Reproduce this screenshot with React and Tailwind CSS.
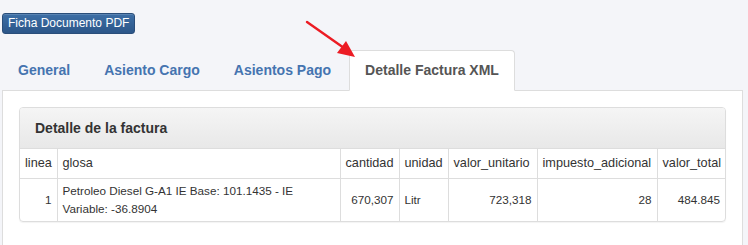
import React from 'react';

const tabs = ['General', 'Asiento Cargo', 'Asientos Pago', 'Detalle Factura XML'];

const columns = [
    { key: 'linea', label: 'linea', width: 'w-[37px]', align: 'text-right' },
    { key: 'glosa', label: 'glosa', width: 'w-[283px]', align: 'text-left' },
    { key: 'cantidad', label: 'cantidad', width: 'w-[59px]', align: 'text-right' },
    { key: 'unidad', label: 'unidad', width: 'w-[49px]', align: 'text-left' },
    { key: 'valor_unitario', label: 'valor_unitario', width: 'w-[89px]', align: 'text-right' },
    { key: 'impuesto_adicional', label: 'impuesto_adicional', width: 'w-[120px]', align: 'text-right' },
    { key: 'valor_total', label: 'valor_total', width: '', align: 'text-right' },
];

const rows = [
    {
        linea: '1',
        glosa: 'Petroleo Diesel G-A1 IE Base: 101.1435 - IE Variable: -36.8904',
        cantidad: '670,307',
        unidad: 'Litr',
        valor_unitario: '723,318',
        impuesto_adicional: '28',
        valor_total: '484.845',
    },
];

const App = () => {
    const active = 3;

    return (
        <div className="relative min-h-[245px] bg-[#f4f5f9] pt-[13px] font-['Liberation_Sans',Arial,sans-serif] text-[#333]">
            <div className="ml-[2px] flex">
                <button
                    type="button"
                    className="h-[21px] rounded-[3px] border border-[#2a4e7a] bg-gradient-to-b from-[#3d6fa6] to-[#2c5689] px-[5px] text-[12px] leading-[19px] text-white shadow-[inset_0_1px_0_rgba(255,255,255,0.15)]"
                >
                    Ficha Documento PDF
                </button>
            </div>

            <div className="mt-[16px] ml-[2px] mr-[5px]">
                <ul className="flex border-b border-[#dddddd]">
                    {tabs.map((tab, i) => (
                        <li key={tab} className="-mb-px mr-[2px]">
                            <span
                                className={
                                    i === active
                                        ? 'block h-[41px] rounded-t-[4px] border border-[#dddddd] border-b-transparent bg-white px-[15px] text-[14px] font-bold leading-[39px] text-[#555]'
                                        : 'block h-[41px] rounded-t-[4px] border border-transparent px-[15px] text-[14px] font-bold leading-[39px] text-[#4574b0]'
                                }
                            >
                                {tab}
                            </span>
                        </li>
                    ))}
                </ul>

                <div className="min-h-[200px] border-x border-[#dddddd] bg-white p-4">
                    <div className="overflow-hidden rounded-[4px] border border-[#dddddd] shadow-[0_1px_1px_rgba(0,0,0,0.05)]">
                        <div className="h-[41px] border-b border-[#dddddd] bg-gradient-to-b from-[#f5f5f5] to-[#e8e8e8] px-[15px] text-[14px] font-bold leading-[40px] text-[#333]">
                            Detalle de la factura
                        </div>
                        <table className="w-full table-fixed border-collapse text-[11.7px]">
                            <colgroup>
                                {columns.map((col) => (
                                    <col key={col.key} className={col.width} />
                                ))}
                            </colgroup>
                            <thead>
                                <tr className="h-[29px]">
                                    {columns.map((col, i) => (
                                        <th
                                            key={col.key}
                                            className={`border-b border-[#dddddd] px-[5px] text-left text-[12.7px] font-normal text-[#333] ${i > 0 ? 'border-l' : ''}`}
                                        >
                                            {col.label}
                                        </th>
                                    ))}
                                </tr>
                            </thead>
                            <tbody>
                                {rows.map((row) => (
                                    <tr key={row.linea} className="h-[43px]">
                                        {columns.map((col, i) => (
                                            <td
                                                key={col.key}
                                                className={`border-[#dddddd] px-[5px] py-[3px] leading-[18px] ${col.align} ${i > 0 ? 'border-l' : ''}`}
                                            >
                                                {row[col.key]}
                                            </td>
                                        ))}
                                    </tr>
                                ))}
                            </tbody>
                        </table>
                    </div>
                </div>
            </div>

            <svg
                className="pointer-events-none absolute left-[300px] top-[15px]"
                width="70"
                height="50"
                viewBox="0 0 70 50"
            >
                <line x1="7" y1="7" x2="44" y2="33" stroke="#ec1c24" strokeWidth="2.4" strokeLinecap="round" />
                <polygon points="55,42 37,38 46,26" fill="#ec1c24" />
            </svg>
        </div>
    );
};

export default App;
